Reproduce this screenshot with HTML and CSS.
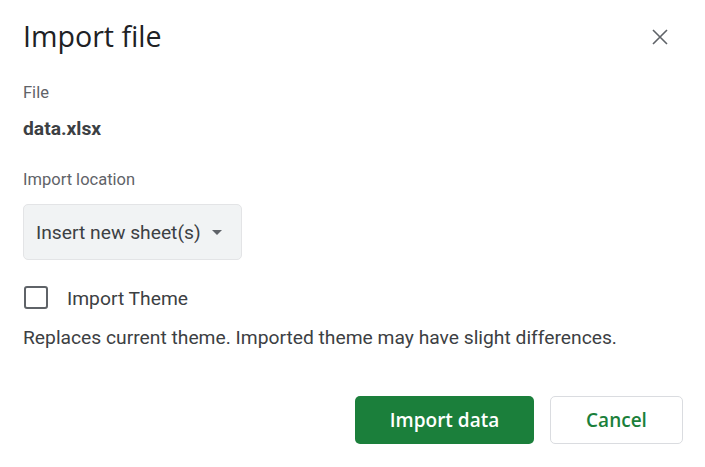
FILE: index.html
```html
<!DOCTYPE html>
<html lang="en">
<head>
<meta charset="utf-8">
<title>Import file</title>
<link rel="stylesheet" href="styles.css">
</head>
<body>
<div class="dialog">
  <div class="header">
    <h1 class="title">Import file</h1>
    <button class="close" aria-label="Close">
      <svg width="24" height="24" viewBox="0 0 24 24"><path d="M5 5L19 19M19 5L5 19" stroke="#5f6368" stroke-width="1.6" fill="none"/></svg>
    </button>
  </div>
  <div class="label label-file">File</div>
  <div class="filename">data.xlsx</div>
  <div class="label label-location">Import location</div>
  <div class="select">
    <span class="select-text">Insert new sheet(s)</span>
    <span class="select-arrow"></span>
  </div>
  <label class="check-row">
    <span class="checkbox"></span>
    <span class="check-text">Import Theme</span>
  </label>
  <p class="desc">Replaces current theme. Imported theme may have slight differences.</p>
  <div class="actions">
    <button class="btn btn-primary">Import data</button>
    <button class="btn btn-secondary">Cancel</button>
  </div>
</div>
</body>
</html>
```

FILE: styles.css
```css
* { box-sizing: border-box; }
html, body {
  margin: 0;
  background: #ffffff;
}
body {
  font-family: Roboto, "Liberation Sans", Arial, sans-serif;
  color: #3c4043;
}
.dialog {
  width: 705px;
  height: 467px;
  padding: 0 22px 0 23px;
}
.header {
  display: flex;
  justify-content: space-between;
  align-items: center;
  padding-top: 18px;
  padding-right: 11px;
}
.title {
  margin: 0;
  font-family: "Open Sans", Roboto, sans-serif;
  font-weight: 400;
  font-size: 28.6px;
  line-height: 36px;
  color: #202124;
}
.close {
  width: 24px;
  height: 24px;
  padding: 0;
  border: 0;
  background: none;
  margin-top: 2px;
  display: flex;
}
.label {
  font-size: 16.5px;
  line-height: 20px;
  color: #5f6368;
}
.label-file { margin-top: 29px; }
.filename {
  margin-top: 14px;
  font-size: 19.25px;
  line-height: 24px;
  font-weight: 700;
  color: #3c4043;
}
.label-location { margin-top: 29px; }
.select {
  margin-top: 14px;
  width: 219px;
  height: 56px;
  display: flex;
  align-items: center;
  padding-left: 12px;
  background: #f1f3f4;
  border: 1px solid #e3e4e6;
  border-radius: 5px;
}
.select-text {
  font-size: 19.25px;
  color: #3c4043;
}
.select-arrow {
  margin-left: 11px;
  margin-top: 1px;
  width: 0;
  height: 0;
  border-left: 5px solid transparent;
  border-right: 5px solid transparent;
  border-top: 5px solid #5f6368;
}
.check-row {
  margin-top: 26px;
  display: flex;
  align-items: flex-start;
  padding-left: 1px;
}
.checkbox {
  width: 24px;
  height: 23px;
  border: 2px solid #5f6368;
  border-radius: 3px;
}
.check-text {
  margin-left: 19px;
  margin-top: 1px;
  font-size: 19.25px;
  line-height: 24px;
  color: #3c4043;
}
.desc {
  margin: 15px 0 0;
  font-size: 19.25px;
  line-height: 24px;
  color: #3c4043;
}
.actions {
  margin-top: 46px;
  display: flex;
  justify-content: flex-end;
  gap: 16px;
}
.btn {
  height: 48px;
  border-radius: 5px;
  font-family: "Open Sans", Roboto, sans-serif;
  font-weight: 600;
  font-size: 19px;
  padding: 0;
}
.btn-primary {
  width: 179px;
  background: #1b7f3b;
  color: #ffffff;
  border: 0;
}
.btn-secondary {
  width: 133px;
  background: #ffffff;
  color: #1b7f3b;
  border: 1px solid #dadce0;
}
```
